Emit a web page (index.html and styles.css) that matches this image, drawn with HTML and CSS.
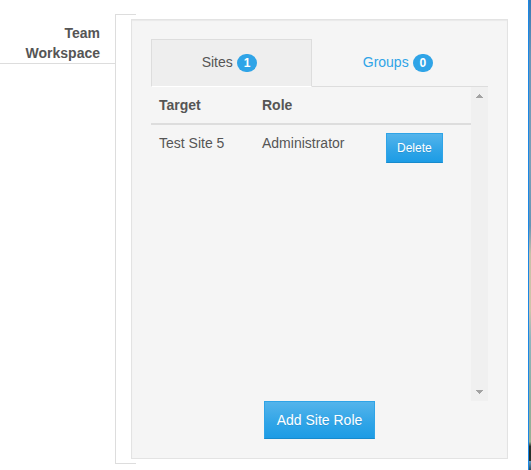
FILE: index.html
```html
<!DOCTYPE html>
<html lang="en">
<head>
<meta charset="utf-8">
<title>Team Workspace</title>
<link rel="stylesheet" href="styles.css">
</head>
<body>
<div class="page">
  <div class="field-label" id="workspace-label">Team<br>Workspace</div>
  <section class="bracket" aria-labelledby="workspace-label">
    <div class="panel">
      <nav class="tabs">
        <a class="tab tab-active" href="#sites">Sites <span class="badge">1</span></a>
        <a class="tab" href="#groups">Groups <span class="badge">0</span></a>
      </nav>
      <div class="scroll-area" id="sites">
        <div class="table-wrap">
          <table class="roles">
            <colgroup><col class="col-target"><col class="col-role"><col></colgroup>
            <thead>
              <tr><th>Target</th><th>Role</th><th></th></tr>
            </thead>
            <tbody>
              <tr>
                <td>Test Site 5</td>
                <td>Administrator</td>
                <td><button class="btn btn-small" type="button">Delete</button></td>
              </tr>
            </tbody>
          </table>
        </div>
        <div class="scrollbar" aria-hidden="true">
          <svg width="7" height="4" viewBox="0 0 7 4" shape-rendering="crispEdges"><path d="M3 0h1v1h1v1h1v1h1v1H0V3h1V2h1V1h1z" fill="#a3a3a3"/></svg>
          <svg width="7" height="4" viewBox="0 0 7 4" shape-rendering="crispEdges"><path d="M0 0h7v1H6v1H5v1H4v1H3V3H2V2H1V1H0z" fill="#a3a3a3"/></svg>
        </div>
      </div>
      <div class="actions"><button class="btn" type="button">Add Site Role</button></div>
    </div>
  </section>
  <div class="backdrop"></div>
</div>
</body>
</html>
```
FILE: styles.css
```css
* {
  box-sizing: border-box;
}

body {
  margin: 0;
  background: #fff;
  color: #555;
  font: 14px/20px "Liberation Sans", Arial, sans-serif;
}

.page {
  display: flex;
  align-items: flex-start;
  min-height: 100vh;
}

.field-label {
  flex: 0 0 115px;
  padding: 23px 15px 0 0;
  border-bottom: 1px solid #ddd;
  font-weight: bold;
  text-align: right;
}

.bracket {
  position: relative;
  flex: 1;
  margin: 14px 20px 6px 0;
  padding: 5px 0 5px 15px;
  border-left: 1px solid #ddd;
}

.bracket::before {
  content: "";
  position: absolute;
  inset: 0 auto 0 0;
  width: 20px;
  border: solid #ddd;
  border-width: 1px 0;
}

.panel {
  position: relative;
  padding: 19px;
  border: 1px solid #e3e3e3;
  background: #f5f5f5;
  box-shadow: inset 0 1px 1px rgba(0, 0, 0, 0.05);
}

.tabs {
  display: grid;
  grid-template-columns: 161fr 176fr;
}

.tab {
  height: 48px;
  padding: 13px 4px 0 0;
  border-bottom: 1px solid #ddd;
  color: #2fa4e7;
  text-align: center;
  text-decoration: none;
}

.tab-active {
  padding-top: 12px;
  border: 1px solid #ddd;
  border-bottom-color: #fff;
  background: #eee;
  color: #555;
}

.badge {
  display: inline-block;
  min-width: 20px;
  padding: 3px 7px;
  border-radius: 10px;
  background: #2fa4e7;
  color: #fff;
  font-size: 12px;
  font-weight: bold;
  line-height: 12px;
}

.scroll-area {
  display: flex;
  height: 314px;
}

.table-wrap {
  flex: 1;
}

.roles {
  width: 100%;
  border-collapse: separate;
  border-spacing: 0;
  table-layout: fixed;
}

.col-target {
  width: 103px;
}

.col-role {
  width: 124px;
}

.roles th {
  padding: 8px;
  border-bottom: 2px solid #ddd;
  text-align: left;
}

.roles td {
  padding: 8px;
  vertical-align: top;
}

.scrollbar {
  flex: 0 0 17px;
  display: flex;
  flex-direction: column;
  justify-content: space-between;
  align-items: center;
  padding: 7px 0;
  background: #f0f0f0;
}

.actions {
  text-align: center;
}

.btn {
  display: block;
  margin: 0 auto;
  padding: 8px 12px;
  border: 1px solid #2fa4e7;
  border-bottom-color: #178acc;
  background: linear-gradient(#54b4eb, #2fa4e7 60%, #1d9ce5);
  color: #fff;
  font: 14px/20px "Liberation Sans", Arial, sans-serif;
  text-shadow: 0 1px 0 rgba(0, 0, 0, 0.1);
  white-space: nowrap;
}

.btn-small {
  margin: 0;
  padding: 5px 10px;
  font-size: 12px;
  line-height: 18px;
}

.backdrop {
  align-self: stretch;
  flex: 0 0 3px;
  border-left: 1px solid #1a87e4;
  background: linear-gradient(#3679b4, #6b96b8 12%, #7ca0b8 35%, #6795b5 48%, #c8c0a8 54%, #d1c4aa 66%, #8fb5c0 72%, #8eae9e 85%, #9aaf94 94%, #25302a 95%, #25302a 98%, #6fa4c8 98%, #294a58);
}
```
